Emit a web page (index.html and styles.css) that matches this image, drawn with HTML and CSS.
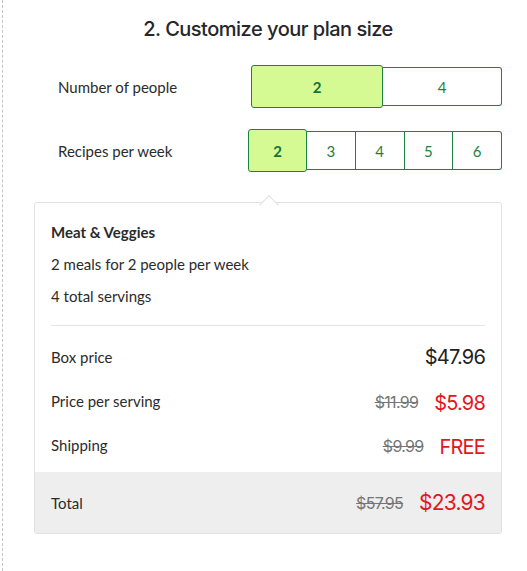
FILE: index.html
```html
<!DOCTYPE html>
<html>
<head>
<meta charset="utf-8">
<link rel="stylesheet" href="styles.css">
</head>
<body>
<div class="page">
  <div class="content">
    <h1 class="title">2. Customize your plan size</h1>
    <div class="row row-people">
      <span class="label">Number of people</span>
      <div class="seg seg-people">
        <div class="opt selected">2</div>
        <div class="opt-group">
          <div class="opt">4</div>
        </div>
      </div>
    </div>
    <div class="row row-recipes">
      <span class="label">Recipes per week</span>
      <div class="seg seg-recipes">
        <div class="opt selected">2</div>
        <div class="opt-group">
          <div class="opt">3</div>
          <div class="opt">4</div>
          <div class="opt">5</div>
          <div class="opt">6</div>
        </div>
      </div>
    </div>
    <div class="card">
      <div class="card-body">
        <div class="plan-name">Meat &amp; Veggies</div>
        <div class="plan-line">2 meals for 2 people per week</div>
        <div class="plan-line">4 total servings</div>
        <div class="divider"></div>
        <div class="price-row">
          <span class="p-label">Box price</span>
          <span class="p-values"><span class="price">$47.96</span></span>
        </div>
        <div class="price-row">
          <span class="p-label">Price per serving</span>
          <span class="p-values"><s class="old">$11.99</s><span class="price red">$5.98</span></span>
        </div>
        <div class="price-row">
          <span class="p-label">Shipping</span>
          <span class="p-values"><s class="old">$9.99</s><span class="price red">FREE</span></span>
        </div>
      </div>
      <div class="total">
        <span class="p-label">Total</span>
        <span class="p-values"><s class="old">$57.95</s><span class="price red">$23.93</span></span>
      </div>
    </div>
  </div>
</div>
</body>
</html>
```
FILE: styles.css
```css
* { box-sizing: border-box; }
html, body { margin: 0; padding: 0; background: #fff; }
body {
  font-family: Lato, "Noto Sans", sans-serif;
  color: #2b2b2b;
}
.page {
  margin-left: 2px;
  border-left: 1px dashed #c4c4c4;
  height: 571px;
}
.content {
  margin-left: 31px;
  width: 468px;
  padding-top: 17px;
}
.title {
  margin: 0;
  font-family: Inter, "Liberation Sans", sans-serif;
  font-weight: 500;
  font-size: 20px;
  line-height: 24px;
  letter-spacing: -0.5px;
  text-align: center;
  color: #26262b;
}
.row {
  display: flex;
  align-items: center;
  justify-content: space-between;
  height: 43px;
  padding-left: 24px;
}
.row-people { margin-top: 24px; }
.row-recipes { margin-top: 21px; }
.label { font-size: 15px; color: #2b2b2b; }
.seg { display: flex; align-items: center; }
.seg-people { width: 251px; }
.seg-recipes { width: 254px; }
.opt-group {
  flex: 1;
  display: flex;
  height: 39px;
  border: 1px solid #1c8443;
  border-left: none;
  border-radius: 0 3px 3px 0;
}
.opt {
  flex: 1;
  display: flex;
  align-items: center;
  justify-content: center;
  font-size: 15px;
  color: #1f7f40;
}
.opt-group .opt + .opt { border-left: 1px solid #1c8443; }
.opt.selected {
  flex: none;
  height: 43px;
  background: #d5f993;
  border: 1px solid #1c8443;
  border-radius: 3px;
  font-weight: 700;
  color: #16703a;
}
.seg-people .opt.selected { width: 132px; }
.seg-recipes .opt.selected { width: 59px; }
.card {
  position: relative;
  margin-top: 30px;
  border: 1px solid #e1e1e1;
  border-radius: 3px;
  height: 332px;
  display: flex;
  flex-direction: column;
}
.card::before {
  content: "";
  position: absolute;
  top: -5px;
  left: 227px;
  width: 13px;
  height: 13px;
  background: #fff;
  border-top: 1px solid #e1e1e1;
  border-left: 1px solid #e1e1e1;
  transform: rotate(45deg);
}
.card-body {
  position: relative;
  padding: 19px 16px 15px 16px;
}
.plan-name {
  font-size: 15px;
  line-height: 20px;
  font-weight: 700;
}
.plan-line {
  font-size: 15px;
  line-height: 20px;
  margin-top: 12px;
}
.divider {
  margin-top: 19px;
  border-top: 1px solid #e3e3e3;
}
.price-row {
  display: flex;
  align-items: center;
  justify-content: space-between;
  height: 24px;
  margin-top: 19px;
}
.price-row + .price-row { margin-top: 20px; }
.p-label { font-size: 15px; }
.p-values { display: flex; align-items: center; gap: 16px; }
.old {
  font-family: Inter, "Liberation Sans", sans-serif;
  font-size: 16px;
  color: #757575;
  letter-spacing: -0.7px;
  position: relative;
  top: 1px;
}
.price {
  font-family: Inter, "Liberation Sans", sans-serif;
  font-size: 20px;
  letter-spacing: -0.8px;
  color: #222;
}
.price.red { color: #e3161d; position: relative; top: 2px; }
.total {
  flex: 1;
  background: #eeeeee;
  display: flex;
  align-items: center;
  justify-content: space-between;
  padding: 0 16px;
  border-radius: 0 0 3px 3px;
}
.total .price.red { top: 0; font-size: 21px; }
.total .old { top: 0; }
```
